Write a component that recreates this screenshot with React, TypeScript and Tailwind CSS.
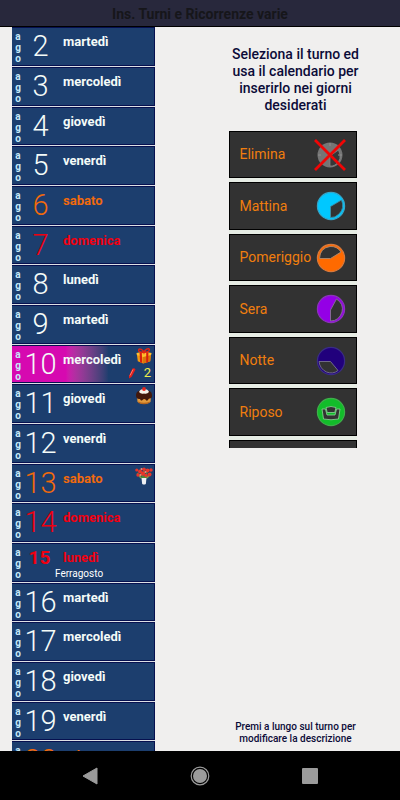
import { useState } from "react";
import type { ReactNode } from "react";

type Day = {
    day: number;
    name: string;
    kind?: "sabato" | "festivo";
    today?: boolean;
    holiday?: string;
    icon?: ReactNode;
    notes?: number;
};

type Shift = {
    name: string;
    icon: ReactNode;
};

function GiftIcon() {
    return (
        <svg width="18" height="18" viewBox="0 0 18 18" aria-hidden="true">
            <path d="M1 7 L8 9 L17 6 L16 15 L8 17.5 L2 15 Z" fill="#f39a12" />
            <path d="M8 9 L17 6 L16 15 L8 17.5 Z" fill="#d9730a" />
            <path d="M0.5 5.5 L9 4 L17.5 5.5 L17 8 L8 10 L1 8 Z" fill="#ffc02e" />
            <path d="M4 5 L6.5 4.6 L7 16.8 L4.6 16 Z M11.5 4.5 L14 5 L13.6 16 L11.5 16.6 Z" fill="#d81e10" />
            <path d="M9 5 C6 5 2.5 4.5 3 2 C4 0 8 2 9 5 C10 2 14 -0.5 15 1.5 C15.5 4 12 5 9 5" fill="none" stroke="#e02414" strokeWidth="1.6" />
        </svg>
    );
}

function CakeIcon() {
    return (
        <svg width="18" height="18" viewBox="0 0 18 18" aria-hidden="true">
            <path d="M2 9 H16 L15.5 15 Q9 19 2.5 15 Z" fill="#e39a3c" />
            <path d="M3 14.5 Q9 17 15 14.5 L14.5 16 Q9 18.5 3.5 16 Z" fill="#b8661c" />
            <path d="M1 8 Q1 3 9 3 Q17 3 17 8 Q17.5 11 15 11.5 Q13.5 11 13 13 Q11.5 14.5 10.5 12.5 Q9 11.5 7.5 13 Q6 14.5 5 12 Q1 12.5 1 8" fill="#42180c" />
            <path d="M4 5 Q5 2 9 2 Q13 2 14 5 Q12 7.5 9 6.5 Q6 7.5 4 5" fill="#f6f1ea" />
            <circle cx="9" cy="2" r="1.9" fill="#e8281e" />
        </svg>
    );
}

function FlowersIcon() {
    return (
        <svg width="18" height="18" viewBox="0 0 18 18" aria-hidden="true">
            <path d="M9 13 L2 6 M9 13 L5 3 M9 13 L9 3 M9 13 L13 3 M9 13 L16 6" stroke="#4c8b3a" strokeWidth="1.3" />
            <path d="M3 7 L6 11 M15 7 L12 11" stroke="#7a9a45" strokeWidth="1.5" />
            <g fill="#e8342a">
                <circle cx="1.8" cy="3" r="1.6" />
                <circle cx="5" cy="4.5" r="2" />
                <circle cx="9" cy="2.2" r="1.8" />
                <circle cx="12.5" cy="3.5" r="2" />
                <circle cx="16" cy="3" r="1.7" />
                <circle cx="3" cy="8" r="1.7" />
                <circle cx="8" cy="6.5" r="2.2" />
                <circle cx="14.5" cy="7.5" r="2" />
                <circle cx="11" cy="8.5" r="1.7" />
            </g>
            <g fill="#f08a78">
                <circle cx="6.5" cy="2" r="1" />
                <circle cx="10.5" cy="5" r="1" />
                <circle cx="5.5" cy="8" r="1" />
            </g>
            <path d="M6.5 11 H11.5 L10.8 17 Q9 18 7.2 17 Z" fill="#eef0f4" />
        </svg>
    );
}

function PencilIcon() {
    return (
        <svg width="8" height="12" viewBox="0 0 8 12" aria-hidden="true">
            <path d="M4.5 1.5 Q6.5 0.5 7.5 2.5 L3.5 10 L1 11.5 L1 9 Z" fill="#e3201c" />
            <path d="M5 2.5 L2 8.5" stroke="#ff7a6c" strokeWidth="1" />
        </svg>
    );
}

function Dial({ color, rim, slice, sliceStroke }: { color: string; rim: string; slice: string; sliceStroke: string }) {
    return (
        <svg className="shrink-0" width="30" height="30" viewBox="0 0 30 30" aria-hidden="true">
            <circle cx="15" cy="15" r="13.6" fill={color} stroke={rim} strokeWidth="1.2" />
            <path d={slice} fill="#323232" stroke={sliceStroke} strokeWidth="0.9" strokeLinejoin="round" />
        </svg>
    );
}

function DeleteIcon() {
    return (
        <svg className="shrink-0" width="32" height="32" viewBox="0 0 32 32" aria-hidden="true">
            <circle cx="16" cy="16" r="12.5" fill="#757575" />
            <path d="M16 17 L24.5 11 Q29 21 21 26 Q18 27.5 16 27 Z" fill="#363636" stroke="#8a8a8a" strokeWidth="0.7" />
            <path d="M24 16 H28 M16 4 V7 M4 16 H7" stroke="#8f8f8f" />
            <path d="M1 1 L31 31 M31 1 L1 31" stroke="#f00505" strokeWidth="2.8" />
        </svg>
    );
}

function RestIcon() {
    return (
        <svg className="shrink-0" width="30" height="30" viewBox="0 0 30 30" aria-hidden="true">
            <circle cx="15" cy="15" r="13.6" fill="#12bd2a" stroke="#3fae4b" strokeWidth="1.2" />
            <path d="M6 12 H9.5 L11 18 H19 L20.5 12 H24 L22.5 22 Q15 23.5 7.5 22 Z" fill="#323232" stroke="#8fd398" strokeWidth="0.8" />
            <path d="M10 10.5 Q15 8.5 20 10.5 L18.8 15.5 H11.2 Z" fill="#323232" stroke="#8fd398" strokeWidth="0.8" />
        </svg>
    );
}

const days: Day[] = [
    { day: 2, name: "martedì" },
    { day: 3, name: "mercoledì" },
    { day: 4, name: "giovedì" },
    { day: 5, name: "venerdì" },
    { day: 6, name: "sabato", kind: "sabato" },
    { day: 7, name: "domenica", kind: "festivo" },
    { day: 8, name: "lunedì" },
    { day: 9, name: "martedì" },
    { day: 10, name: "mercoledì", today: true, icon: <GiftIcon />, notes: 2 },
    { day: 11, name: "giovedì", icon: <CakeIcon /> },
    { day: 12, name: "venerdì" },
    { day: 13, name: "sabato", kind: "sabato", icon: <FlowersIcon /> },
    { day: 14, name: "domenica", kind: "festivo" },
    { day: 15, name: "lunedì", kind: "festivo", holiday: "Ferragosto" },
    { day: 16, name: "martedì" },
    { day: 17, name: "mercoledì" },
    { day: 18, name: "giovedì" },
    { day: 19, name: "venerdì" },
    { day: 20, name: "sabato", kind: "sabato" },
];

const shifts: Shift[] = [
    { name: "Elimina", icon: <DeleteIcon /> },
    {
        name: "Mattina",
        icon: <Dial color="#00c8ff" rim="#35a5c8" sliceStroke="#3b8ea8" slice="M14.5 15.5 L25.5 9 Q29 17 23 23 Q19 27 14.5 26.5 Z" />,
    },
    {
        name: "Pomeriggio",
        icon: <Dial color="#ff6a00" rim="#d8793c" sliceStroke="#b08a70" slice="M3.5 15.5 Q4 5 14 3.5 Q21 3 25 9 L14.5 15.5 Z" />,
    },
    {
        name: "Sera",
        icon: <Dial color="#9400e6" rim="#8a35b8" sliceStroke="#8b6f9c" slice="M14.5 16 L20.5 5 Q28 10 26 18 Q23 27 14.5 27 Z" />,
    },
    {
        name: "Notte",
        icon: <Dial color="#21007c" rim="#3a2c86" sliceStroke="#77728f" slice="M3 15.5 H14.5 L22 24.5 Q17 28.5 10.5 26 Q4 23 3 15.5 Z" />,
    },
    { name: "Riposo", icon: <RestIcon /> },
    { name: "", icon: null },
];

function dayColor(kind?: Day["kind"]) {
    if (kind === "sabato") return "text-[#f26a0c]";
    if (kind === "festivo") return "text-[#f00010]";
    return "text-[#f4fbf8]";
}

function DayRow({ item }: { item: Day }) {
    return (
        <li className="h-10 border-b border-[#dcdfe4] nth-[3n]:h-[39px]">
            <button
                className={`flex h-full w-full border-y border-r border-[#06104f] text-left ${item.today ? "bg-linear-to-r from-[#d609b0] from-38% to-[#1c3e6e] to-68%" : "bg-[#1c3e6e]"
                    }`}
            >
                <span className="flex w-3 flex-col items-center pt-[3px] text-[10px] leading-[11px] font-bold text-[#c4e9fa]">
                    <span>a</span>
                    <span>g</span>
                    <span>o</span>
                </span>
                <span className={`flex min-w-0 flex-1 flex-col ${dayColor(item.kind)}`}>
                    <span className="flex">
                        {item.holiday ? (
                            <span className="w-[33px] pr-[2px] text-center text-[19px] leading-[27px] font-bold">{item.day}</span>
                        ) : (
                            <span className="w-[33px] text-center text-[29px] leading-[37px] font-[350]">{item.day}</span>
                        )}
                        <span className="pl-[6px] text-[13px] leading-[28px] font-bold">{item.name}</span>
                    </span>
                    {item.holiday && (
                        <span className="-mt-1 pl-[31px] text-[10px] leading-[12px] text-white">{item.holiday}</span>
                    )}
                </span>
                {item.icon && (
                    <span className="-ml-6 flex shrink-0 flex-col items-end pt-[2px] pr-px">
                        {item.icon}
                        {item.notes && (
                            <span className="flex items-center gap-2 pr-[2px] text-[13px] leading-[18px] text-[#f0ee4c]">
                                <PencilIcon />
                                {item.notes}
                            </span>
                        )}
                    </span>
                )}
            </button>
        </li>
    );
}

export default function App() {
    const [selected, setSelected] = useState("");

    return (
        <div className="flex h-screen flex-col overflow-hidden bg-[#f0efee] font-[Roboto,sans-serif]">
            <header className="flex h-[27px] shrink-0 items-center justify-center border-b border-black bg-[#28283c] pt-[2px]">
                <h1 className="text-[14px] leading-4 font-bold text-[#16161a]">Ins. Turni e Ricorrenze varie</h1>
            </header>

            <main className="flex min-h-0 flex-1">
                {/* Calendar */}
                <ul className="ml-3 w-[143px] shrink-0 overflow-hidden">
                    {days.map((item) => (
                        <DayRow key={item.day} item={item} />
                    ))}
                </ul>

                {/* Shift picker */}
                <section className="ml-9 flex flex-1 flex-col items-center pt-[19px] pb-[6px] text-center text-[#0b0b38]">
                    <p className="w-[136px] text-[14px] leading-[17px] font-medium">
                        Seleziona il turno ed usa il calendario per inserirlo nei giorni desiderati
                    </p>
                    <ul className="mt-[17px] mr-[6px] flex h-[317px] w-32 flex-col gap-1 overflow-hidden bg-[#e6ece4]">
                        {shifts.map((shift, i) => (
                            <li key={i} className="h-12 shrink-0 nth-[odd]:h-[47px]">
                                <button
                                    onClick={() => setSelected(shift.name)}
                                    aria-pressed={shift.name !== "" && selected === shift.name}
                                    className="flex h-full w-full items-center justify-between border border-black bg-[#323232] pr-[10px] pl-[10px] text-[14px] text-[#f07e0e]"
                                >
                                    {shift.name}
                                    {shift.icon}
                                </button>
                            </li>
                        ))}
                    </ul>
                    <p className="mt-auto w-32 text-[10px] leading-3 font-medium">
                        Premi a lungo sul turno per modificare la descrizione
                    </p>
                </section>
            </main>

            {/* Android navigation bar */}
            <nav className="grid h-[49px] shrink-0 grid-cols-3 bg-black px-[35px]">
                <button aria-label="Indietro" className="flex items-center justify-center">
                    <svg width="16" height="18" viewBox="0 0 16 18">
                        <path d="M1 9 L15 1 V17 Z" fill="#9b9b9b" stroke="#9b9b9b" strokeLinejoin="round" />
                    </svg>
                </button>
                <button aria-label="Home" className="flex items-center justify-center">
                    <svg width="20" height="20" viewBox="0 0 20 20">
                        <circle cx="10" cy="10" r="8.8" fill="none" stroke="#9b9b9b" strokeWidth="1.2" />
                        <circle cx="10" cy="10" r="7" fill="#9b9b9b" />
                    </svg>
                </button>
                <button aria-label="Recenti" className="flex items-center justify-center">
                    <svg width="16" height="16" viewBox="0 0 16 16">
                        <rect width="16" height="16" rx="1" fill="#9b9b9b" />
                    </svg>
                </button>
            </nav>
        </div>
    );
}
